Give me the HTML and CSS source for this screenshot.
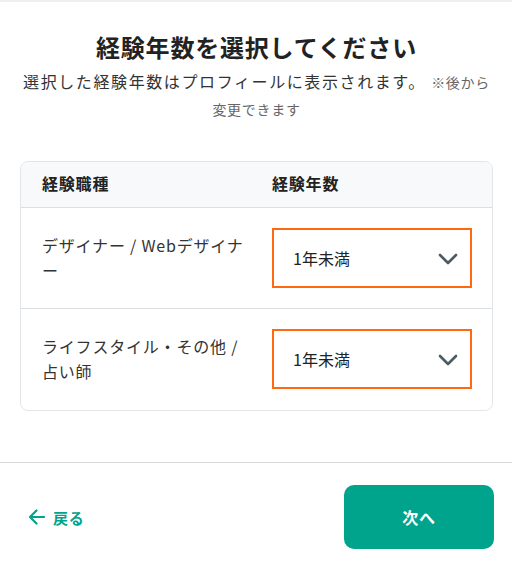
FILE: index.html
```html
<!DOCTYPE html>
<html lang="ja">
<head>
<meta charset="utf-8">
<link rel="stylesheet" href="styles.css">
</head>
<body>
<div class="topbar"></div>
<main class="content">
  <h1 class="title">経験年数を選択してください</h1>
  <p class="lead">選択した経験年数はプロフィールに表示されます。 <span class="note">※後から<span class="nowrap">変更できます</span></span></p>
  <div class="card">
    <div class="row head">
      <div class="cell">経験職種</div>
      <div class="cell">経験年数</div>
    </div>
    <div class="row">
      <div class="cell job">デザイナー / Webデザイナー</div>
      <div class="cell">
        <div class="select"><span>1年未満</span>
          <svg class="chev" width="20" height="12" viewBox="0 0 20 12"><path d="M2 2 L10 10 L18 2" fill="none" stroke="#4a5d65" stroke-width="2.6" stroke-linecap="round" stroke-linejoin="round"/></svg>
        </div>
      </div>
    </div>
    <div class="row last">
      <div class="cell job">ライフスタイル・その他 / 占い師</div>
      <div class="cell">
        <div class="select"><span>1年未満</span>
          <svg class="chev" width="20" height="12" viewBox="0 0 20 12"><path d="M2 2 L10 10 L18 2" fill="none" stroke="#4a5d65" stroke-width="2.6" stroke-linecap="round" stroke-linejoin="round"/></svg>
        </div>
      </div>
    </div>
  </div>
</main>
<footer class="footer">
  <a class="back"><svg width="17" height="16" viewBox="0 0 17 16"><path d="M16 8 H2 M8.5 1.5 L2 8 L8.5 14.5" fill="none" stroke="#00a38b" stroke-width="2.2" stroke-linecap="round" stroke-linejoin="round"/></svg><span>戻る</span></a>
  <button class="next">次へ</button>
</footer>
</body>
</html>
```
FILE: styles.css
```css
* { box-sizing: border-box; }
html, body { margin: 0; padding: 0; background: #fff; }
body {
  font-family: "Noto Sans CJK JP", "Noto Sans", sans-serif;
  color: #222;
  letter-spacing: 0.05em;
  width: 512px;
}
.topbar { height: 2px; background: #f0f0f0; }
.content { padding: 28px 19px 0 20px; }
.title {
  margin: 0;
  text-align: center;
  font-size: 24px;
  line-height: 34px;
  font-weight: 700;
  color: #222;
}
.lead {
  margin: 4px 0 0;
  text-align: center;
  font-size: 16px;
  line-height: 26px;
  letter-spacing: 0.1em;
  color: #333;
}
.note { font-size: 14px; color: #666; letter-spacing: 0.05em; }
.nowrap { white-space: nowrap; }
.card {
  margin-top: 39px;
  border: 1px solid #e3e6e8;
  border-radius: 8px;
  overflow: hidden;
}
.row {
  display: grid;
  grid-template-columns: 216px 200px;
  column-gap: 14px;
  align-items: center;
  padding: 20px 20px 20px 21px;
  border-bottom: 1px solid #dcdfe2;
}
.row.last { border-bottom: none; padding-bottom: 21px; }
.row.head {
  background: #f8f9fb;
  padding-top: 9px;
  padding-bottom: 11px;
  font-weight: 700;
  font-size: 16px;
  line-height: 25px;
}
.job { font-size: 16px; line-height: 25px; color: #333; }
.select {
  height: 60px;
  border: 2px solid #ff6a10;
  background: #fff;
  display: flex;
  align-items: center;
  justify-content: space-between;
  padding: 0 12px 0 19px;
  font-size: 16px;
  letter-spacing: 0;
  color: #222;
}
.chev { display: block; margin-top: 2px; }
.footer {
  margin-top: 51px;
  border-top: 1px solid #d5d9db;
  padding: 22px 18px 34px 28px;
  display: flex;
  align-items: center;
  justify-content: space-between;
}
.back {
  display: flex;
  align-items: center;
  gap: 8px;
  color: #00a38b;
  font-weight: 700;
  font-size: 15px;
}
.back svg { display: block; }
.next {
  width: 150px;
  height: 64px;
  border: none;
  border-radius: 10px;
  background: #00a48c;
  color: #fff;
  font-family: inherit;
  font-weight: 700;
  font-size: 16px;
  letter-spacing: 0.05em;
}
```
